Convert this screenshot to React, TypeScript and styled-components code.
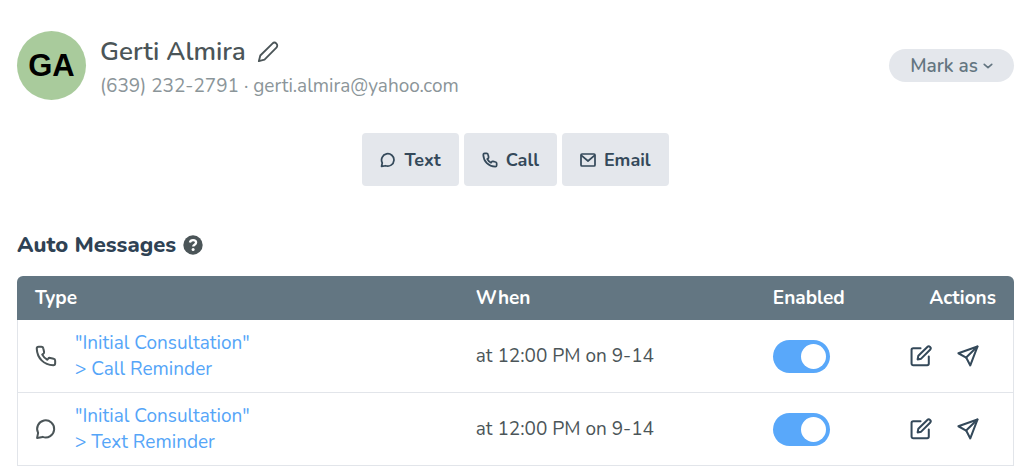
import React, { useState } from "react";
import styled, { createGlobalStyle } from "styled-components";

const Global = createGlobalStyle`
  *, *::before, *::after { box-sizing: border-box; }
  body {
    margin: 0;
    background: #fff;
    color: #4b5558;
    font-family: Nunito, "Open Sans", sans-serif;
    font-size: 19px;
    line-height: 26px;
  }
  button { font: inherit; color: inherit; border: 0; cursor: pointer; }
`;

const Page = styled.main`
  padding: 31px 10px 0 17px;
`;

const Header = styled.header`
  display: flex;
  align-items: center;
  justify-content: space-between;
`;

const Person = styled.div`
  display: flex;
  align-items: center;
  gap: 14px;
`;

const Avatar = styled.div`
  display: grid;
  place-items: center;
  width: 69px;
  height: 69px;
  border-radius: 50%;
  background: #a9cb9c;
  color: #000;
  font: 700 31px/1 "Liberation Sans", sans-serif;
`;

const NameRow = styled.div`
  display: flex;
  align-items: center;
  gap: 11px;
`;

const Name = styled.h1`
  margin: 0;
  font-size: 26px;
  line-height: 38px;
  font-weight: 600;
`;

const Contact = styled.p`
  margin: 2px 0 0;
  color: #8b9599;
`;

const IconButton = styled.button<{ $color?: string }>`
  display: inline-flex;
  padding: 0;
  background: none;
  color: ${(p) => p.$color ?? "#4b5558"};
`;

const MarkAs = styled.button`
  display: flex;
  align-items: center;
  gap: 5px;
  height: 33px;
  padding: 0 21px;
  border-radius: 17px;
  background: #e4e7ec;
  color: #637580;
  font-weight: 600;
`;

const ContactActions = styled.div`
  display: flex;
  justify-content: center;
  gap: 5px;
  margin: 33px 0 46px;
`;

const ContactButton = styled.button`
  display: flex;
  align-items: center;
  gap: 8px;
  height: 53px;
  padding: 0 18px;
  border-radius: 4px;
  background: #e4e7ec;
  color: #34495a;
  font-size: 18px;
  font-weight: 700;
`;

const SectionTitle = styled.h2`
  display: flex;
  align-items: center;
  gap: 7px;
  margin: 0 0 18px;
  color: #2f4254;
  font-size: 22px;
  line-height: 26px;
  font-weight: 800;
`;

const TableFrame = styled.div`
  overflow: hidden;
  border-radius: 6px 6px 0 0;
`;

const Table = styled.table`
  width: 100%;
  border-collapse: separate;
  border-spacing: 0;
  table-layout: fixed;
`;

const Th = styled.th<{ $width?: string; $align?: string }>`
  width: ${(p) => p.$width ?? "auto"};
  height: 44px;
  padding: 0 18px;
  background: #637682;
  color: #fff;
  font-weight: 700;
  text-align: ${(p) => p.$align ?? "left"};
`;

const Td = styled.td`
  height: 73px;
  padding: 0 18px;
  vertical-align: middle;
  border: 0 solid #e2e5ea;
  border-bottom-width: 1px;
  &:first-child { border-left-width: 1px; padding-left: 17px; }
  &:last-child { border-right-width: 1px; padding-right: 17px; }
`;

const TypeCell = styled.div`
  display: flex;
  align-items: center;
  gap: 18px;
`;

const TypeLink = styled.a`
  color: #55a5f8;
  text-decoration: none;
`;

const RowActions = styled.div`
  display: flex;
  justify-content: flex-end;
  gap: 25px;
  padding-right: 17px;
`;

const Toggle = styled.input`
  appearance: none;
  display: block;
  width: 57px;
  height: 33px;
  margin: 0;
  padding: 4px;
  border-radius: 17px;
  background: #cbd2d9;
  cursor: pointer;
  &::before {
    content: "";
    display: block;
    width: 25px;
    height: 25px;
    border-radius: 50%;
    background: #fff;
  }
  &:checked { background: #59a8fa; }
  &:checked::before { margin-left: auto; }
`;

type IconProps = { size: number; stroke?: number };

const Svg = ({ size, stroke = 2.2, children }: IconProps & { children: React.ReactNode }) => (
  <svg width={size} height={size} viewBox="0 0 24 24" fill="none" stroke="currentColor"
    strokeWidth={stroke} strokeLinecap="round" strokeLinejoin="round" aria-hidden="true">
    {children}
  </svg>
);

const PhoneIcon = (p: IconProps) => (
  <Svg {...p}>
    <path d="M4 2H6.9C8 2 8.8 2.6 9 3.6L9.9 7.4C10.1 8.4 9.8 9.2 9 9.7L7.9 10.5C9.2 13 11 14.8 13.5 16.1L14.3 15C14.8 14.2 15.6 13.9 16.6 14.1L20.4 15C21.4 15.2 22 16 22 17.1V20C22 21.3 21.2 22.1 20 22.1C9.6 21.6 2.4 14.4 1.9 4C1.9 2.8 2.7 2 4 2Z" />
  </Svg>
);

const ChatIcon = (p: IconProps) => (
  <Svg {...p}>
    <path d="M2.3 21.7L3.4 16.2A9.3 9.3 0 1 1 8.4 20.6Z" />
  </Svg>
);

const MailIcon = (p: IconProps) => (
  <Svg {...p}>
    <rect x="1.5" y="3" width="21" height="18" rx="1.5" />
    <path d="M2.5 5.5L12 13.5L21.5 5.5" />
  </Svg>
);

const PencilIcon = (p: IconProps) => (
  <Svg {...p}>
    <path d="M2 22L3.6 15.8L16.8 2.8A3.1 3.1 0 0 1 21.2 7.2L8.2 20.4Z" />
  </Svg>
);

const EditIcon = (p: IconProps) => (
  <Svg {...p}>
    <path d="M11.5 3.5H3.5A1.8 1.8 0 0 0 1.7 5.3V20.3A1.8 1.8 0 0 0 3.5 22.1H18.7A1.8 1.8 0 0 0 20.5 20.3V12.5" />
    <path d="M8.3 15.7L9.1 11.8L18.9 2.1A2 2 0 0 1 21.9 5.1L12.2 14.9Z" />
  </Svg>
);

const SendIcon = (p: IconProps) => (
  <Svg {...p}>
    <path d="M22.3 1.7L1.5 9L10 13.7L14.5 22.3Z" />
    <path d="M22.3 1.7L10 13.7" />
  </Svg>
);

const ChevronIcon = (p: IconProps) => (
  <Svg {...p}>
    <path d="M3 8L12 16L21 8" />
  </Svg>
);

const HelpIcon = () => (
  <svg width="20" height="20" viewBox="0 0 20 20" aria-hidden="true">
    <circle cx="10" cy="10" r="9.7" fill="#4b5558" />
    <path d="M6.9 7.5C7.3 5.9 8.4 5.1 10 5.1C11.8 5.1 13.1 6.1 13.1 7.6C13.1 9.8 10.2 9.6 10.2 11.6"
      fill="none" stroke="#fff" strokeWidth="2.3" />
    <circle cx="10.1" cy="14.5" r="1.5" fill="#fff" />
  </svg>
);

const rows = [
  { id: "call", Icon: PhoneIcon, label: "Call Reminder" },
  { id: "text", Icon: ChatIcon, label: "Text Reminder" },
];

export default function App() {
  const [enabled, setEnabled] = useState<Record<string, boolean>>({ call: true, text: true });

  return (
    <>
      <Global />
      <Page>
        <Header>
          <Person>
            <Avatar>GA</Avatar>
            <div>
              <NameRow>
                <Name>Gerti Almira</Name>
                <IconButton aria-label="Edit name"><PencilIcon size={22} stroke={2} /></IconButton>
              </NameRow>
              <Contact>(639) 232-2791 · gerti.almira@yahoo.com</Contact>
            </div>
          </Person>
          <MarkAs>Mark as <ChevronIcon size={10} stroke={4} /></MarkAs>
        </Header>

        <ContactActions>
          <ContactButton><ChatIcon size={16} stroke={2.6} />Text</ContactButton>
          <ContactButton><PhoneIcon size={16} stroke={2.6} />Call</ContactButton>
          <ContactButton><MailIcon size={16} stroke={2.6} />Email</ContactButton>
        </ContactActions>

        <SectionTitle>Auto Messages <HelpIcon /></SectionTitle>

        <TableFrame>
          <Table>
            <thead>
              <tr>
                <Th>Type</Th>
                <Th $width="297px">When</Th>
                <Th $width="14%">Enabled</Th>
                <Th $width="12%" $align="right">Actions</Th>
              </tr>
            </thead>
            <tbody>
              {rows.map(({ id, Icon, label }) => (
                <tr key={id}>
                  <Td>
                    <TypeCell>
                      <Icon size={22} />
                      <TypeLink href="#">"Initial Consultation"<br />&gt; {label}</TypeLink>
                    </TypeCell>
                  </Td>
                  <Td>at 12:00 PM on 9-14</Td>
                  <Td>
                    <Toggle type="checkbox" role="switch" aria-label={`${label} enabled`}
                      checked={enabled[id]}
                      onChange={(e) => setEnabled({ ...enabled, [id]: e.target.checked })} />
                  </Td>
                  <Td>
                    <RowActions>
                      <IconButton $color="#34495a" aria-label={`Edit ${label}`}><EditIcon size={22} /></IconButton>
                      <IconButton $color="#34495a" aria-label={`Send ${label}`}><SendIcon size={22} /></IconButton>
                    </RowActions>
                  </Td>
                </tr>
              ))}
            </tbody>
          </Table>
        </TableFrame>
      </Page>
    </>
  );
}
